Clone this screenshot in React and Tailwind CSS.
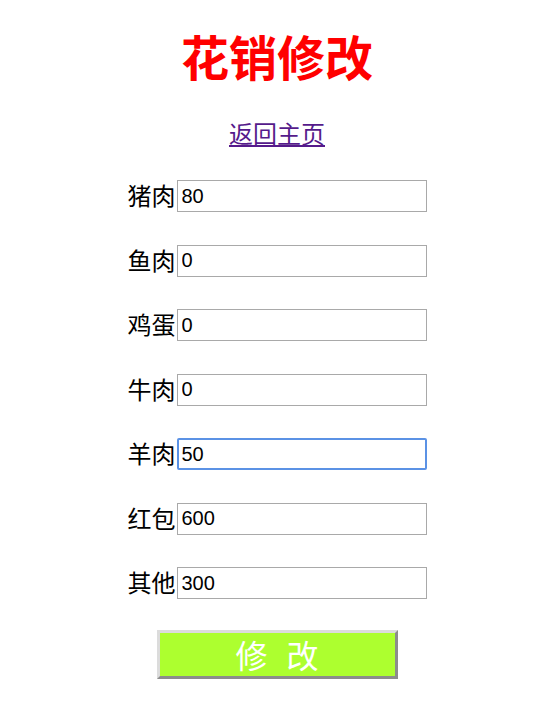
import React, { useState } from 'react';

const items = [
  { name: '猪肉', value: '80' },
  { name: '鱼肉', value: '0' },
  { name: '鸡蛋', value: '0' },
  { name: '牛肉', value: '0' },
  { name: '羊肉', value: '50', focused: true },
  { name: '红包', value: '600' },
  { name: '其他', value: '300' },
];

const App = () => {
  const [values, setValues] = useState(items.map((i) => i.value));

  return (
    <div className="min-h-[716px] bg-white pl-4 flex flex-col items-center font-['Liberation_Sans','Noto_Sans_CJK_SC',sans-serif]">
      <h1 className="mt-[27px] h-[56px] leading-[56px] text-[48px] font-bold text-[#ff0000] font-['Noto_Sans_CJK_SC',sans-serif]">
        花销修改
      </h1>
      <a href="#" className="mt-[34px] h-[32px] leading-[32px] text-[24px] text-[#551a8b] underline font-['Noto_Sans_CJK_SC',sans-serif]">
        返回主页
      </a>
      <form className="mt-[31px] flex flex-col items-center gap-[32.5px]">
        {items.map((item, i) => (
          <div key={item.name} className="flex items-center h-[32px]">
            <span className="text-[24px] text-black leading-[30px] mb-[2px] mr-[1px] font-['Noto_Sans_CJK_SC',sans-serif]">{item.name}</span>
            <input
              value={values[i]}
              onChange={(e) => {
                const next = [...values];
                next[i] = e.target.value;
                setValues(next);
              }}
              className={
                item.focused
                  ? 'w-[250px] h-[32px] px-[3px] text-[20px] text-black bg-white border-2 border-[#5b92e5] rounded-[2px] outline-none font-["Liberation_Sans",sans-serif]'
                  : 'w-[250px] h-[32px] px-[4px] text-[20px] text-black bg-white border border-[#a9a9a9] outline-none font-["Liberation_Sans",sans-serif]'
              }
            />
          </div>
        ))}
        <button
          type="button"
          className="-mt-[2px] w-[241px] h-[49px] bg-[#adff2f] text-white text-[32px] tracking-[0.6em] pl-[0.6em] border-[3px] border-t-[#dcdcdc] border-l-[#dcdcdc] border-b-[#8c8c8c] border-r-[#8c8c8c] leading-none font-['Noto_Sans_CJK_SC',sans-serif]"
        >
          修改
        </button>
      </form>
    </div>
  );
};

export default App;
